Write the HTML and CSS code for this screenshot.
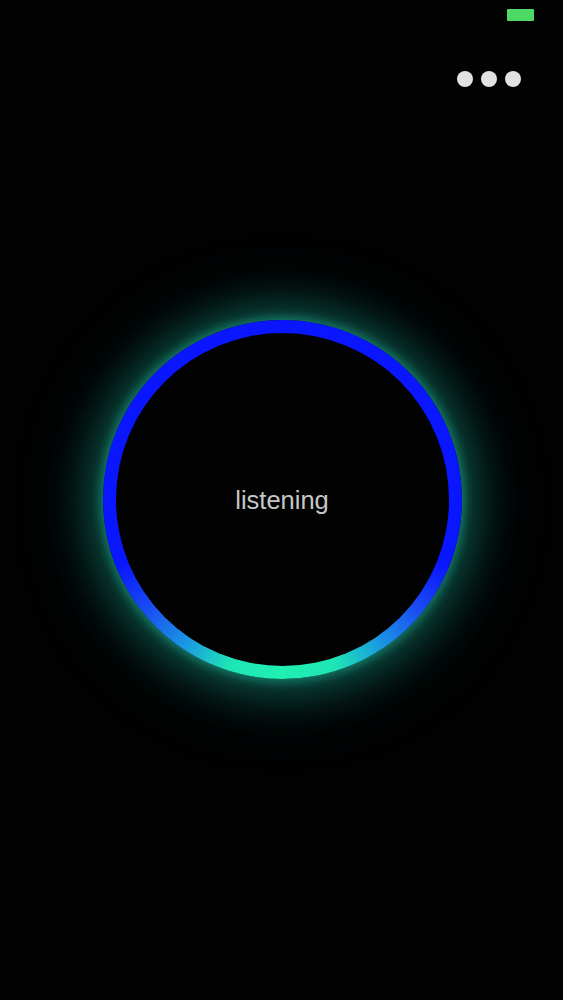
FILE: index.html
```html
<!DOCTYPE html>
<html lang="en">
<head>
<meta charset="utf-8">
<title>Listening</title>
<link rel="stylesheet" href="styles.css">
</head>
<body>
<div class="screen">
  <div class="status-bar">
    <span class="battery"></span>
  </div>
  <div class="toolbar">
    <button class="more" aria-label="More">
      <span class="dot"></span><span class="dot"></span><span class="dot"></span>
    </button>
  </div>
  <main class="stage">
    <div class="ring">
      <div class="ring-inner">
        <span class="label">listening</span>
      </div>
    </div>
  </main>
</div>
</body>
</html>
```

FILE: styles.css
```css
html, body {
  margin: 0;
  padding: 0;
  background: #020203;
}

.screen {
  display: flex;
  flex-direction: column;
  width: 563px;
  height: 1000px;
  background: #020203;
  font-family: "Liberation Sans", Arial, sans-serif;
  overflow: hidden;
}

.status-bar {
  display: flex;
  justify-content: flex-end;
  align-items: flex-start;
  height: 30px;
  padding: 9px 29px 0 0;
  box-sizing: border-box;
}

.battery {
  display: block;
  width: 27px;
  height: 12px;
  background: #4cd964;
  border-radius: 1px;
}

.toolbar {
  display: flex;
  justify-content: flex-end;
  height: 70px;
  padding: 41px 42px 0 0;
  box-sizing: border-box;
}

.more {
  display: flex;
  gap: 8px;
  padding: 0;
  margin: 0;
  border: 0;
  background: none;
  height: 16px;
}

.dot {
  display: block;
  width: 16px;
  height: 16px;
  border-radius: 50%;
  background: #e2e2e2;
}

.stage {
  display: flex;
  justify-content: center;
  padding-top: 220px;
  padding-left: 1px;
}

.ring {
  width: 359px;
  height: 359px;
  box-sizing: border-box;
  padding: 13px;
  border-radius: 50%;
  background: conic-gradient(
    from 0deg,
    #0a16ff 0deg,
    #0a16ff 112deg,
    #1a50f2 130deg,
    #1a98e2 146deg,
    #1ee4b6 162deg,
    #20f0b0 180deg,
    #1ee4b6 198deg,
    #1a98e2 214deg,
    #1a50f2 230deg,
    #0a16ff 248deg,
    #0a16ff 360deg
  );
  box-shadow:
    0 0 10px 3px rgba(28, 160, 135, 0.6),
    0 0 40px 14px rgba(20, 130, 110, 0.55),
    0 4px 70px 20px rgba(12, 90, 78, 0.3);
}

.ring-inner {
  display: flex;
  align-items: center;
  justify-content: center;
  width: 100%;
  height: 100%;
  border-radius: 50%;
  background: #020203;
}

.label {
  font-size: 25.5px;
  color: #c6c6c6;
  letter-spacing: 0;
  margin-top: 2px;
}
```
